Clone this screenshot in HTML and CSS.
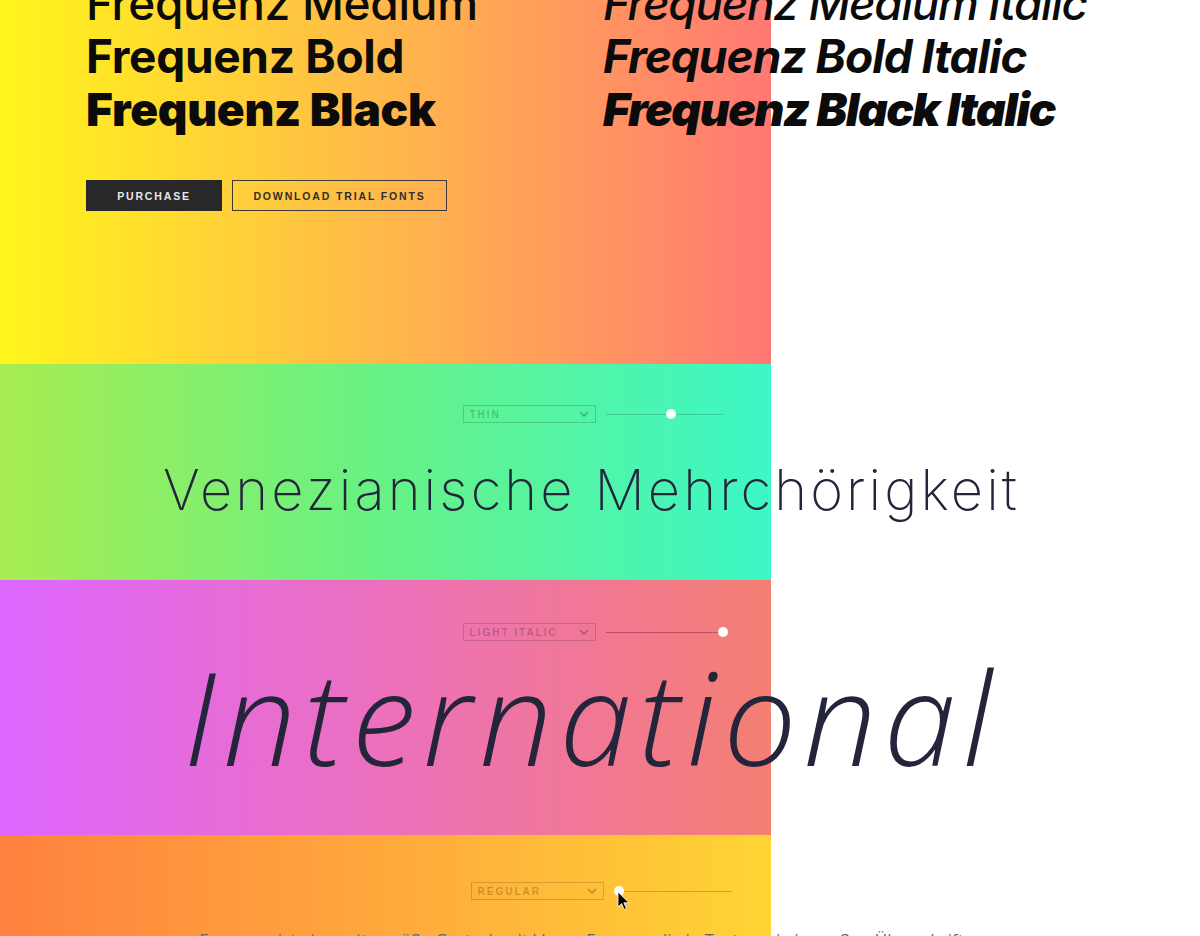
FILE: index.html
```html
<!DOCTYPE html>
<html lang="de">
<head>
<meta charset="utf-8">
<title>Frequenz</title>
<link rel="stylesheet" href="styles.css">
</head>
<body>
<main class="page">
  <section class="band band--intro">
    <div class="weights">
      <ul class="weights__col">
        <li class="weight weight--medium">Frequenz Medium</li>
        <li class="weight weight--bold">Frequenz Bold</li>
        <li class="weight weight--black">Frequenz Black</li>
      </ul>
      <ul class="weights__col weights__col--italic">
        <li class="weight weight--medium">Frequenz Medium Italic</li>
        <li class="weight weight--bold">Frequenz Bold Italic</li>
        <li class="weight weight--black">Frequenz Black Italic</li>
      </ul>
    </div>
    <div class="actions">
      <a class="btn btn--solid" href="#">Purchase</a>
      <a class="btn btn--outline" href="#">Download trial fonts</a>
    </div>
  </section>

  <section class="band band--green">
    <div class="controls">
      <div class="select">
        <span class="select__label">Thin</span>
        <svg class="select__chevron" viewBox="0 0 10 6" width="10" height="6"><path d="M1 1l4 4 4-4"/></svg>
      </div>
      <div class="slider"><span class="slider__thumb" style="left:56%"></span></div>
    </div>
    <p class="specimen specimen--thin">Venezianische Mehrchörigkeit</p>
  </section>

  <section class="band band--pink">
    <div class="controls">
      <div class="select">
        <span class="select__label">Light Italic</span>
        <svg class="select__chevron" viewBox="0 0 10 6" width="10" height="6"><path d="M1 1l4 4 4-4"/></svg>
      </div>
      <div class="slider"><span class="slider__thumb" style="left:100%"></span></div>
    </div>
    <p class="specimen specimen--italic">International</p>
  </section>

  <section class="band band--orange">
    <div class="controls controls--shifted">
      <div class="select">
        <span class="select__label">Regular</span>
        <svg class="select__chevron" viewBox="0 0 10 6" width="10" height="6"><path d="M1 1l4 4 4-4"/></svg>
      </div>
      <div class="slider slider--wide">
        <span class="slider__thumb" style="left:0%"></span>
        <svg class="cursor" viewBox="0 0 12 19" width="12" height="19"><path d="M1 1v15l3.6-3.4 2.6 5.8 2.2-1-2.6-5.6H12z"/></svg>
      </div>
    </div>
    <p class="copy">Frequenz ist eine zeitgemäße Grotesk mit klaren Formen, die in Texten wie in großen Überschriften gleichermaßen überzeugt und lebendig wirkt.</p>
  </section>
</main>
</body>
</html>
```

FILE: styles.css
```css
html {
  overflow: hidden;
}

body {
  margin: 0;
  background: #ffffff;
  font-family: "Inter", "Liberation Sans", sans-serif;
  color: #0b0b0b;
}

.page {
  width: 1183px;
}

.band {
  display: flow-root;
  box-sizing: border-box;
  width: 1183px;
  background-repeat: no-repeat;
  background-size: 771px 100%;
  background-position: 0 0;
}

.band--intro {
  height: 364px;
  padding-left: 86px;
  background-image: linear-gradient(90deg, #fff61b 0%, #ffb84a 50%, #ff7874 100%);
}

.band--green {
  height: 216px;
  padding-top: 41px;
  background-image: linear-gradient(90deg, #a8ec50 0%, #6cf180 45%, #3cf7c6 100%);
}

.band--pink {
  height: 255px;
  padding-top: 43px;
  background-image: linear-gradient(90deg, #dd66ff 0%, #ec70bc 50%, #f47f72 100%);
}

.band--orange {
  height: 320px;
  padding-top: 47px;
  background-image: linear-gradient(90deg, #ff813f 0%, #ffad3c 55%, #ffd534 100%);
}

/* weights list */
.weights {
  display: grid;
  grid-template-columns: 517px 1fr;
  margin-top: -23px;
}

.weights__col {
  list-style: none;
  margin: 0;
  padding: 0;
}

.weights__col--italic {
  font-style: italic;
}

.weight {
  font-size: 46px;
  line-height: 53px;
  white-space: nowrap;
  letter-spacing: -0.3px;
}

.weights__col--italic .weight {
  letter-spacing: -1.4px;
}

.weights__col--italic .weight--bold {
  letter-spacing: -1px;
}

.weight--medium { font-weight: 500; }
.weight--bold { font-weight: 700; }
.weight--black { font-weight: 900; }

/* buttons */
.actions {
  display: flex;
  gap: 10px;
  margin-top: 44px;
}

.btn {
  box-sizing: border-box;
  display: flex;
  align-items: center;
  justify-content: center;
  height: 31px;
  font-family: "Liberation Sans", Arial, sans-serif;
  font-weight: 700;
  font-size: 10.5px;
  letter-spacing: 1.85px;
  text-transform: uppercase;
  text-decoration: none;
}

.btn--solid {
  width: 136px;
  background: #28282a;
  color: #e8e8e8;
  border: 1px solid #28282a;
}

.btn--outline {
  width: 215px;
  color: #2e2e2e;
  border: 1px solid #3a3a3a;
}

/* controls */
.controls {
  display: flex;
  align-items: center;
  justify-content: center;
  gap: 10px;
  height: 18px;
  padding-left: 2px;
}

.controls--shifted {
  gap: 15px;
  padding-left: 19px;
}

.select {
  box-sizing: border-box;
  width: 133px;
  height: 18px;
  display: flex;
  align-items: center;
  justify-content: space-between;
  padding: 0 6px 0 6px;
  border: 1px solid rgba(0, 0, 0, 0.16);
}

.select__label {
  font-family: "Liberation Sans", Arial, sans-serif;
  font-weight: 700;
  font-size: 10px;
  letter-spacing: 2px;
  text-transform: uppercase;
  color: rgba(0, 0, 0, 0.22);
}

.select__chevron {
  fill: none;
  stroke: rgba(0, 0, 0, 0.28);
  stroke-width: 1.6;
}

.slider {
  position: relative;
  width: 117px;
  height: 1px;
  background: rgba(0, 0, 0, 0.16);
}

.band--pink .slider {
  background: rgba(90, 0, 40, 0.35);
}

.band--orange .slider {
  background: rgba(60, 40, 0, 0.25);
}

.slider--wide {
  width: 113px;
}

.slider__thumb {
  position: absolute;
  top: -5px;
  width: 10px;
  height: 10px;
  margin-left: -5px;
  border-radius: 50%;
  background: #ffffff;
}

.cursor {
  position: absolute;
  left: -2px;
  top: 0;
  fill: #000000;
  stroke: #ffffff;
  stroke-width: 0.8;
}

/* specimens */
.specimen {
  margin: 0;
  text-align: center;
  white-space: nowrap;
  color: #24253a;
  line-height: 1;
}

.specimen--thin {
  margin-top: 39px;
  font-family: "Inter", sans-serif;
  font-weight: 200;
  font-size: 56px;
  letter-spacing: 3.1px;
}

.specimen--italic {
  margin-top: 10px;
  font-family: "Open Sans", sans-serif;
  font-weight: 300;
  font-style: italic;
  font-size: 130px;
  letter-spacing: 7px;
}

.copy {
  max-width: 830px;
  margin: 26px auto 0;
  text-align: center;
  font-family: "Open Sans", sans-serif;
  font-size: 17px;
  line-height: 28px;
  color: #6a6a6a;
}
```
